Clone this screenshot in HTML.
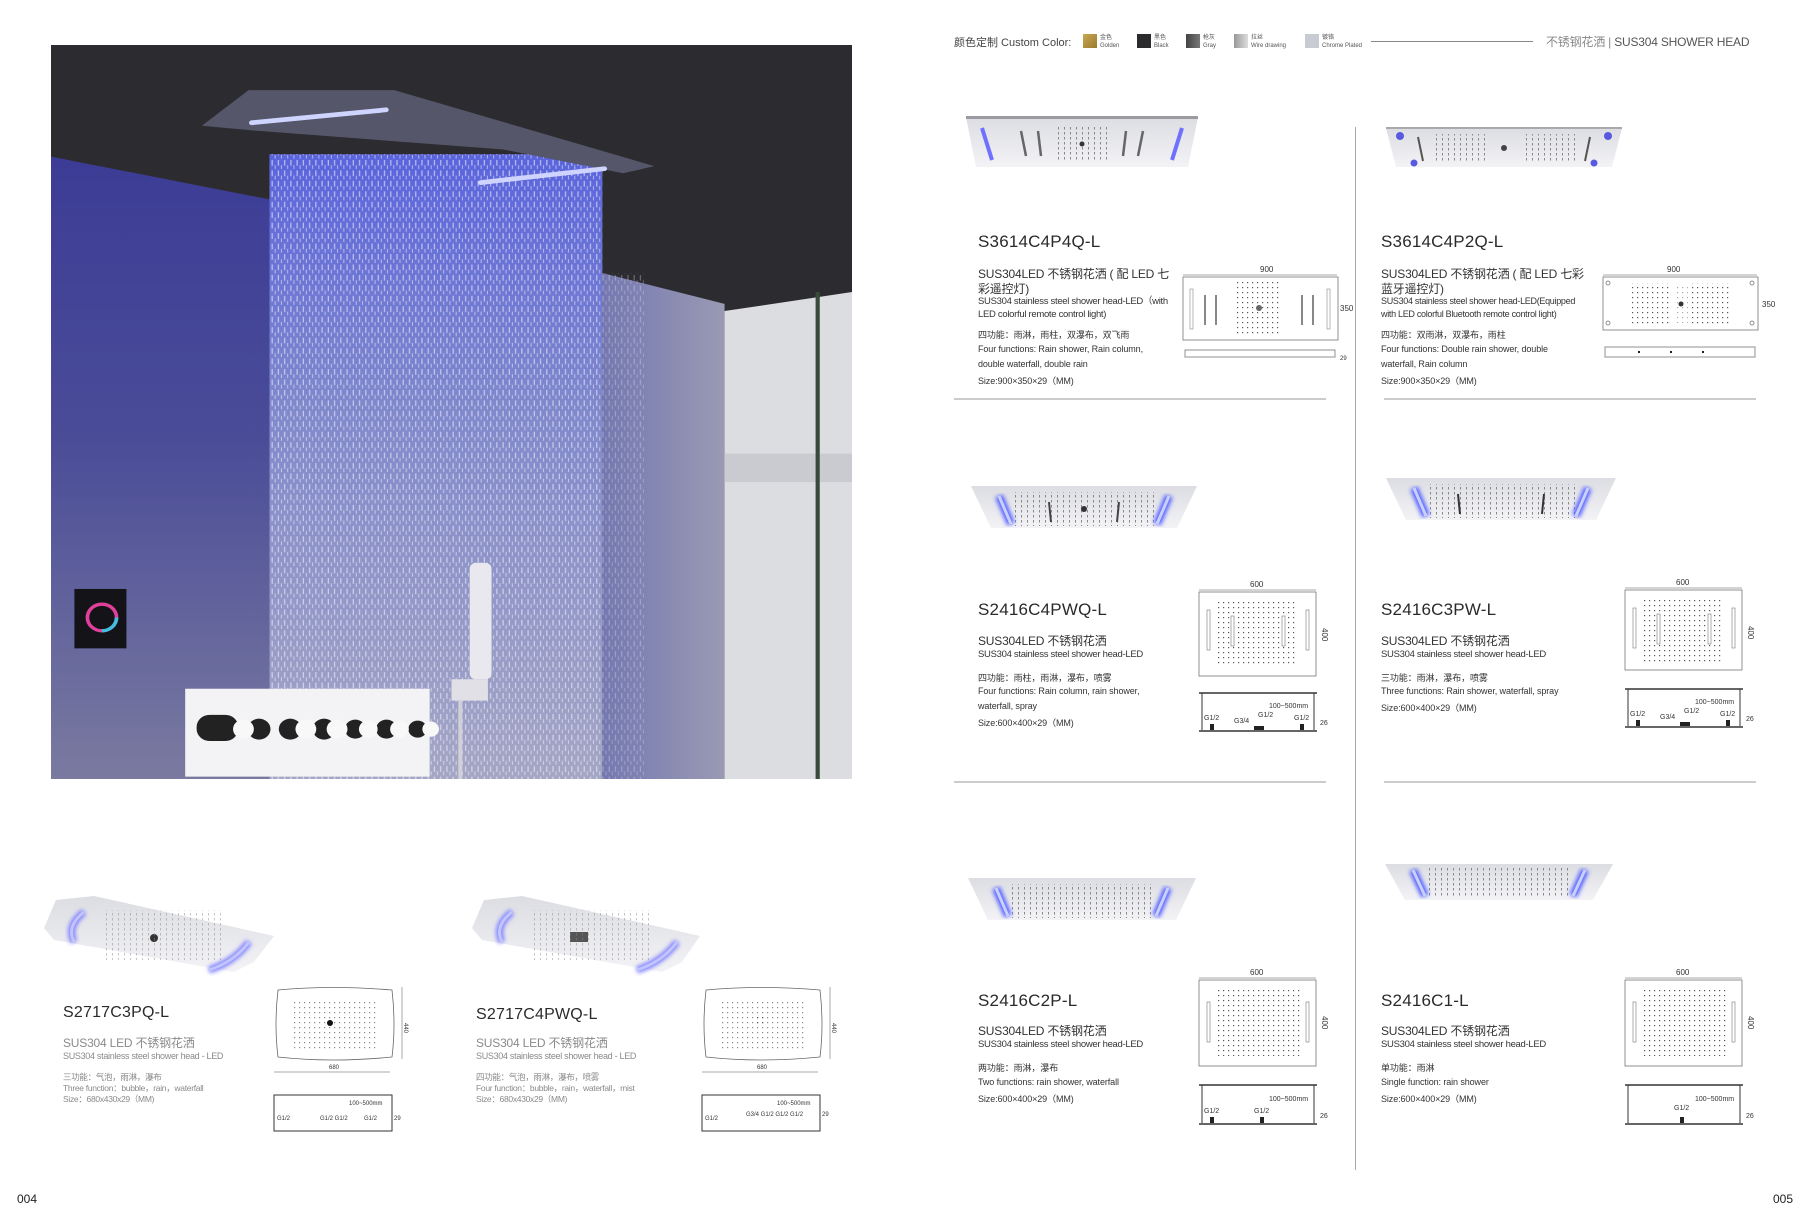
<!DOCTYPE html>
<html><head><meta charset="utf-8">
<style>
*{margin:0;padding:0;box-sizing:border-box}
body{width:1807px;height:1226px;background:#fff;position:relative;overflow:hidden;font-family:"Liberation Sans","Noto Sans CJK SC",sans-serif;color:#333}
.a{position:absolute;white-space:nowrap}
.t{font-size:17px;color:#2a2a2a;letter-spacing:.2px}
.c{font-size:12px;color:#333;line-height:15px;letter-spacing:-.2px}
.e{font-size:9.5px;color:#333;line-height:13px;letter-spacing:-.3px}
.f{font-size:9px;color:#333;letter-spacing:-.1px}
.g{color:#8a8a8a}
.sw{position:absolute;top:34px;width:14px;height:14px}
.sl{position:absolute;font-size:6px;color:#555;line-height:8px;top:34px}
</style></head><body>

<!-- PHOTO -->
<svg class="a" style="left:51px;top:45px" width="801" height="734" viewBox="0 0 1540 1545" preserveAspectRatio="none">
<defs>
<linearGradient id="wall" x1="0" y1="0" x2="0" y2="1"><stop offset="0" stop-color="#3c3c96"/><stop offset=".45" stop-color="#4a4c98"/><stop offset="1" stop-color="#7a7aa0"/></linearGradient>
<linearGradient id="rain" x1="0" y1="0" x2="0" y2="1"><stop offset="0" stop-color="#5a64dc"/><stop offset=".4" stop-color="#8088cc"/><stop offset="1" stop-color="#a4a6c4"/></linearGradient>
<linearGradient id="rw" x1="0" y1="0" x2="1" y2="0"><stop offset="0" stop-color="#7478b0"/><stop offset="1" stop-color="#9a9ab4"/></linearGradient>
<pattern id="drops" width="12" height="22" patternUnits="userSpaceOnUse"><rect x="4" y="0" width="2.5" height="12" fill="#f0f2ff" opacity=".6"/><rect x="10" y="11" width="2" height="8" fill="#fff" opacity=".5"/></pattern>
</defs>
<rect width="1540" height="1545" fill="#2c2b30"/>
<polygon points="0,235 420,325 420,1545 0,1545" fill="url(#wall)"/>
<rect x="420" y="230" width="640" height="1315" fill="url(#rain)"/>
<rect x="420" y="230" width="640" height="1315" fill="url(#drops)"/>
<polygon points="1060,480 1295,545 1295,1545 1060,1545" fill="url(#rw)"/>
<rect x="1060" y="480" width="80" height="1065" fill="url(#drops)" opacity=".5"/>
<polygon points="1295,560 1540,520 1540,1545 1295,1545" fill="#dcdde1"/>
<rect x="1295" y="860" width="245" height="60" fill="#cacbd0"/>
<rect x="1470" y="520" width="8" height="1025" fill="#3a4a3a"/>
<polygon points="290,170 380,95 660,95 1160,255 1100,270 870,220 390,180" fill="#55566a"/>
<rect x="380" y="145" width="270" height="10" rx="5" fill="#cfd4ff" transform="rotate(-6 515 150)"/>
<rect x="820" y="270" width="250" height="10" rx="5" fill="#cfd4ff" transform="rotate(-7 945 275)"/>
<rect x="45" y="1145" width="100" height="125" fill="#141418"/>
<circle cx="98" cy="1205" r="28" fill="none" stroke="#e0409a" stroke-width="7"/>
<circle cx="98" cy="1205" r="28" fill="none" stroke="#40c0e0" stroke-width="7" stroke-dasharray="44 132"/>
<rect x="258" y="1355" width="470" height="185" fill="#f3f3f5"/>
<g fill="#222"><rect x="280" y="1410" width="80" height="55" rx="25"/><circle cx="400" cy="1440" r="22"/><circle cx="460" cy="1440" r="22"/><circle cx="525" cy="1440" r="22"/><circle cx="585" cy="1440" r="20"/><circle cx="645" cy="1440" r="20"/><circle cx="705" cy="1440" r="18"/></g>
<g fill="#f8f8f8"><circle cx="370" cy="1440" r="20"/><circle cx="490" cy="1440" r="20"/><circle cx="550" cy="1440" r="20"/><circle cx="610" cy="1440" r="18"/><circle cx="670" cy="1440" r="18"/><circle cx="730" cy="1440" r="16"/></g>
<rect x="805" y="1090" width="42" height="245" rx="12" fill="#e8e8ee"/>
<rect x="770" y="1335" width="70" height="45" fill="#e0e0e6"/>
<rect x="783" y="1380" width="8" height="165" fill="#d0d0d8"/>
</svg>

<!-- HEADER -->
<div class="a" style="left:954px;top:34px;font-size:11px;color:#444">颜色定制 Custom Color:</div>
<div class="sw" style="left:1083px;background:linear-gradient(135deg,#c8a850,#9a7a30)"></div><div class="sl" style="left:1100px">金色<br>Golden</div>
<div class="sw" style="left:1137px;background:#2b2b2d"></div><div class="sl" style="left:1154px">黑色<br>Black</div>
<div class="sw" style="left:1186px;background:linear-gradient(90deg,#444,#777)"></div><div class="sl" style="left:1203px">枪灰<br>Gray</div>
<div class="sw" style="left:1234px;background:linear-gradient(90deg,#999,#ddd)"></div><div class="sl" style="left:1251px">拉丝<br>Wire drawing</div>
<div class="sw" style="left:1305px;background:#c8ccd2"></div><div class="sl" style="left:1322px">镀铬<br>Chrome Plated</div>
<div class="a" style="left:1371px;top:41px;width:162px;height:1px;background:#888"></div>
<div class="a" style="left:1546px;top:33px;font-size:12px;color:#888;letter-spacing:-.2px">不锈钢花洒 | <span style="color:#555">SUS304 SHOWER HEAD</span></div>

<!-- dividers -->
<div class="a" style="left:1355px;top:127px;width:1px;height:1043px;background:#aaa"></div>
<div class="a" style="left:954px;top:398px;width:372px;height:2px;background:#ccc"></div>
<div class="a" style="left:1384px;top:398px;width:372px;height:2px;background:#ccc"></div>
<div class="a" style="left:954px;top:781px;width:372px;height:2px;background:#ccc"></div>
<div class="a" style="left:1384px;top:781px;width:372px;height:2px;background:#ccc"></div>

<svg width="0" height="0" style="position:absolute"><defs>
<linearGradient id="hg" x1="0" y1="0" x2="0" y2="1"><stop offset="0" stop-color="#dcdde2"/><stop offset="1" stop-color="#f3f3f6"/></linearGradient>
<pattern id="hd" width="6" height="5" patternUnits="userSpaceOnUse"><rect x="2" y="1" width="1" height="2.5" fill="#888"/></pattern>
<filter id="gl"><feGaussianBlur stdDeviation="2"/></filter>
<pattern id="dd" width="5" height="5" patternUnits="userSpaceOnUse"><rect x="2" y="2" width="1.2" height="1.2" fill="#555"/></pattern>
</defs></svg>

<!-- row1 L -->
<svg class="a" style="left:966px;top:116px" width="232" height="52" viewBox="0 0 232 52"><polygon points="0,1 232,1 222,51 10,51" fill="url(#hg)"/><rect x="0" y="0" width="232" height="3" fill="#9a9aa0"/><rect x="87" y="10" width="58" height="36" fill="url(#hd)"/><circle cx="116" cy="28" r="2.5" fill="#333"/><g stroke="#666" stroke-width="2.5"><line x1="55" y1="15" x2="60" y2="40"/><line x1="72" y1="15" x2="75" y2="40"/><line x1="177" y1="15" x2="172" y2="40"/><line x1="160" y1="15" x2="157" y2="40"/></g><g stroke="#7070ff" stroke-width="4"><line x1="16" y1="12" x2="26" y2="44"/><line x1="216" y1="12" x2="206" y2="44"/></g></svg>
<!-- row1 R -->
<svg class="a" style="left:1386px;top:127px" width="236" height="42" viewBox="0 0 236 42"><polygon points="0,1 236,1 226,40 10,40" fill="url(#hg)"/><rect x="0" y="0" width="236" height="2" fill="#aaa"/><rect x="45" y="7" width="55" height="28" fill="url(#hd)"/><rect x="136" y="7" width="55" height="28" fill="url(#hd)"/><circle cx="118" cy="21" r="3" fill="#444"/><g stroke="#555" stroke-width="2"><line x1="32" y1="10" x2="37" y2="34"/><line x1="204" y1="10" x2="199" y2="34"/></g><g fill="#5a5ae0"><circle cx="14" cy="9" r="4"/><circle cx="222" cy="9" r="4"/><circle cx="28" cy="36" r="3.5"/><circle cx="208" cy="36" r="3.5"/></g></svg>
<!-- row2 L -->
<svg class="a" style="left:971px;top:484px" width="226" height="48" viewBox="0 0 226 48"><polygon points="0,2 226,2 206,44 20,44" fill="url(#hg)"/><rect x="40" y="8" width="146" height="34" fill="url(#hd)"/><circle cx="113" cy="25" r="3" fill="#333"/><g stroke="#444" stroke-width="2"><line x1="78" y1="18" x2="80" y2="38"/><line x1="148" y1="18" x2="146" y2="38"/></g><g stroke="#5560ff" stroke-width="8" filter="url(#gl)"><line x1="28" y1="12" x2="40" y2="40"/><line x1="198" y1="12" x2="186" y2="40"/></g><g stroke="#c8d0ff" stroke-width="3"><line x1="28" y1="12" x2="40" y2="40"/><line x1="198" y1="12" x2="186" y2="40"/></g></svg>
<!-- row2 R -->
<svg class="a" style="left:1386px;top:476px" width="230" height="48" viewBox="0 0 230 48"><polygon points="0,2 230,2 210,44 20,44" fill="url(#hg)"/><rect x="40" y="8" width="150" height="34" fill="url(#hd)"/><g stroke="#333" stroke-width="2"><line x1="72" y1="18" x2="74" y2="38"/><line x1="158" y1="18" x2="156" y2="38"/></g><g stroke="#5560ff" stroke-width="8" filter="url(#gl)"><line x1="28" y1="12" x2="40" y2="40"/><line x1="202" y1="12" x2="190" y2="40"/></g><g stroke="#c8d0ff" stroke-width="3"><line x1="28" y1="12" x2="40" y2="40"/><line x1="202" y1="12" x2="190" y2="40"/></g></svg>
<!-- row3 L -->
<svg class="a" style="left:968px;top:876px" width="228" height="48" viewBox="0 0 228 48"><polygon points="0,2 228,2 208,44 20,44" fill="url(#hg)"/><rect x="40" y="8" width="148" height="34" fill="url(#hd)"/><g stroke="#5560ff" stroke-width="8" filter="url(#gl)"><line x1="28" y1="12" x2="40" y2="40"/><line x1="200" y1="12" x2="188" y2="40"/></g><g stroke="#c8d0ff" stroke-width="3"><line x1="28" y1="12" x2="40" y2="40"/><line x1="200" y1="12" x2="188" y2="40"/></g></svg>
<!-- row3 R -->
<svg class="a" style="left:1385px;top:862px" width="228" height="42" viewBox="0 0 228 42"><polygon points="0,2 228,2 208,38 20,38" fill="url(#hg)"/><rect x="40" y="6" width="148" height="30" fill="url(#hd)"/><g stroke="#5560ff" stroke-width="8" filter="url(#gl)"><line x1="28" y1="8" x2="40" y2="34"/><line x1="200" y1="8" x2="188" y2="34"/></g><g stroke="#c8d0ff" stroke-width="3"><line x1="28" y1="8" x2="40" y2="34"/><line x1="200" y1="8" x2="188" y2="34"/></g></svg>

<!-- bottom left heads -->
<svg class="a" style="left:44px;top:892px" width="230" height="84" viewBox="0 0 230 84"><polygon points="12,8 50,4 230,44 210,70 190,80 10,48 0,36" fill="url(#hg)"/><g stroke="#8080ff" stroke-width="7" filter="url(#gl)" fill="none"><path d="M40,20 Q22,34 30,50"/><path d="M205,50 Q190,70 165,78"/></g><g stroke="#c0c4ff" stroke-width="3" fill="none"><path d="M40,20 Q22,34 30,50"/><path d="M205,50 Q190,70 165,78"/></g><circle cx="110" cy="46" r="4" fill="#333"/><rect x="60" y="18" width="120" height="50" fill="url(#hd)" opacity=".5"/></svg>
<svg class="a" style="left:472px;top:892px" width="228" height="84" viewBox="0 0 228 84"><polygon points="12,8 50,4 228,44 210,70 190,80 10,48 0,36" fill="url(#hg)"/><g stroke="#8080ff" stroke-width="7" filter="url(#gl)" fill="none"><path d="M40,20 Q22,34 30,50"/><path d="M205,50 Q190,70 165,78"/></g><g stroke="#c0c4ff" stroke-width="3" fill="none"><path d="M40,20 Q22,34 30,50"/><path d="M205,50 Q190,70 165,78"/></g><rect x="98" y="40" width="18" height="10" fill="#555"/><rect x="60" y="18" width="120" height="50" fill="url(#hd)" opacity=".5"/></svg>

<!-- TEXT right page -->
<div class="a t" style="left:978px;top:232px">S3614C4P4Q-L</div>
<div class="a c" style="left:978px;top:267px">SUS304LED 不锈钢花洒 ( 配 LED 七<br>彩遥控灯)</div>
<div class="a e" style="left:978px;top:295px">SUS304 stainless steel shower head-LED（with<br>LED colorful remote control light)</div>
<div class="a f" style="left:978px;top:328px">四功能：雨淋，雨柱，双瀑布，双飞雨</div>
<div class="a f" style="left:978px;top:344px">Four functions: Rain shower, Rain column,</div>
<div class="a f" style="left:978px;top:359px">double waterfall, double rain</div>
<div class="a f" style="left:978px;top:374px">Size:900×350×29（MM)</div>

<div class="a t" style="left:1381px;top:232px">S3614C4P2Q-L</div>
<div class="a c" style="left:1381px;top:267px">SUS304LED 不锈钢花洒 ( 配 LED 七彩<br>蓝牙遥控灯)</div>
<div class="a e" style="left:1381px;top:295px;font-size:9px">SUS304 stainless steel shower head-LED(Equipped<br>with LED colorful Bluetooth remote control light)</div>
<div class="a f" style="left:1381px;top:328px">四功能：双雨淋，双瀑布，雨柱</div>
<div class="a f" style="left:1381px;top:344px">Four functions: Double rain shower, double</div>
<div class="a f" style="left:1381px;top:359px">waterfall, Rain column</div>
<div class="a f" style="left:1381px;top:374px">Size:900×350×29（MM)</div>

<div class="a t" style="left:978px;top:600px">S2416C4PWQ-L</div>
<div class="a c" style="left:978px;top:634px">SUS304LED 不锈钢花洒</div>
<div class="a e" style="left:978px;top:648px">SUS304 stainless steel shower head-LED</div>
<div class="a f" style="left:978px;top:671px">四功能：雨柱，雨淋，瀑布，喷雾</div>
<div class="a f" style="left:978px;top:686px">Four functions: Rain column, rain shower,</div>
<div class="a f" style="left:978px;top:701px">waterfall, spray</div>
<div class="a f" style="left:978px;top:716px">Size:600×400×29（MM)</div>

<div class="a t" style="left:1381px;top:600px">S2416C3PW-L</div>
<div class="a c" style="left:1381px;top:634px">SUS304LED 不锈钢花洒</div>
<div class="a e" style="left:1381px;top:648px">SUS304 stainless steel shower head-LED</div>
<div class="a f" style="left:1381px;top:671px">三功能：雨淋，瀑布，喷雾</div>
<div class="a f" style="left:1381px;top:686px">Three functions: Rain shower, waterfall, spray</div>
<div class="a f" style="left:1381px;top:701px">Size:600×400×29（MM)</div>

<div class="a t" style="left:978px;top:991px">S2416C2P-L</div>
<div class="a c" style="left:978px;top:1024px">SUS304LED 不锈钢花洒</div>
<div class="a e" style="left:978px;top:1038px">SUS304 stainless steel shower head-LED</div>
<div class="a f" style="left:978px;top:1061px">两功能：雨淋，瀑布</div>
<div class="a f" style="left:978px;top:1077px">Two functions: rain shower, waterfall</div>
<div class="a f" style="left:978px;top:1092px">Size:600×400×29（MM)</div>

<div class="a t" style="left:1381px;top:991px">S2416C1-L</div>
<div class="a c" style="left:1381px;top:1024px">SUS304LED 不锈钢花洒</div>
<div class="a e" style="left:1381px;top:1038px">SUS304 stainless steel shower head-LED</div>
<div class="a f" style="left:1381px;top:1061px">单功能：雨淋</div>
<div class="a f" style="left:1381px;top:1077px">Single function: rain shower</div>
<div class="a f" style="left:1381px;top:1092px">Size:600×400×29（MM)</div>

<!-- TEXT left page bottom -->
<div class="a t" style="left:63px;top:1004px;font-size:16px">S2717C3PQ-L</div>
<div class="a c g" style="left:63px;top:1036px;font-size:12px">SUS304 LED 不锈钢花洒</div>
<div class="a e g" style="left:63px;top:1050px;font-size:9px">SUS304 stainless steel shower head - LED</div>
<div class="a e g" style="left:63px;top:1072px;font-size:8.5px;line-height:11px">三功能：气泡，雨淋，瀑布<br>Three function：bubble，rain，waterfall<br>Size：680x430x29（MM)</div>
<div class="a t" style="left:476px;top:1006px;font-size:16px">S2717C4PWQ-L</div>
<div class="a c g" style="left:476px;top:1036px;font-size:12px">SUS304 LED 不锈钢花洒</div>
<div class="a e g" style="left:476px;top:1050px;font-size:9px">SUS304 stainless steel shower head - LED</div>
<div class="a e g" style="left:476px;top:1072px;font-size:8.5px;line-height:11px">四功能：气泡，雨淋，瀑布，喷雾<br>Four function：bubble，rain，waterfall，mist<br>Size：680x430x29（MM)</div>

<div class="a" style="left:17px;top:1192px;font-size:12px;color:#222">004</div>
<div class="a" style="left:1773px;top:1192px;font-size:12px;color:#222">005</div>

<!-- DRAWINGS -->
<svg class="a" style="left:1180px;top:265px" width="180" height="102" viewBox="0 0 180 102" font-family="Liberation Sans" font-size="8" fill="#333">
<text x="80" y="7">900</text><line x1="3" y1="10" x2="157" y2="10" stroke="#555" stroke-width=".6"/>
<rect x="3" y="12" width="155" height="63" fill="#fff" stroke="#777" stroke-width=".8"/>
<rect x="56" y="16" width="46" height="55" fill="url(#dd)"/><circle cx="79" cy="43" r="3" fill="#666"/>
<g stroke="#555" stroke-width="1.4"><line x1="25" y1="30" x2="25" y2="60"/><line x1="36" y1="30" x2="36" y2="60"/><line x1="122" y1="30" x2="122" y2="60"/><line x1="133" y1="30" x2="133" y2="60"/></g>
<rect x="10" y="24" width="3" height="40" fill="none" stroke="#888" stroke-width=".6"/><rect x="147" y="24" width="3" height="40" fill="none" stroke="#888" stroke-width=".6"/>
<text x="160" y="46">350</text>
<rect x="5" y="85" width="150" height="7" fill="none" stroke="#777" stroke-width=".8"/><text x="160" y="95" font-size="6">29</text></svg>
<svg class="a" style="left:1600px;top:265px" width="180" height="102" viewBox="0 0 180 102" font-family="Liberation Sans" font-size="8" fill="#333">
<text x="67" y="7">900</text><line x1="3" y1="10" x2="157" y2="10" stroke="#555" stroke-width=".6"/>
<rect x="3" y="12" width="155" height="53" fill="#fff" stroke="#777" stroke-width=".8"/>
<rect x="30" y="18" width="40" height="42" fill="url(#dd)"/><rect x="92" y="18" width="40" height="42" fill="url(#dd)"/><rect x="74" y="20" width="14" height="38" fill="url(#dd)" opacity=".5"/><circle cx="81" cy="39" r="2.5" fill="#333"/>
<g stroke="#777" stroke-width=".8" fill="none"><circle cx="8" cy="18" r="2"/><circle cx="152" cy="18" r="2"/><circle cx="8" cy="58" r="2"/><circle cx="152" cy="58" r="2"/></g>
<text x="162" y="42">350</text>
<rect x="5" y="82" width="150" height="10" fill="none" stroke="#777" stroke-width=".8"/><g fill="#222"><rect x="38" y="86" width="2" height="2"/><rect x="70" y="86" width="2" height="2"/><rect x="102" y="86" width="2" height="2"/></g></svg>

<svg class="a" style="left:1196px;top:580px" width="140" height="160" viewBox="0 0 140 160" font-family="Liberation Sans" font-size="8" fill="#333">
<text x="54" y="7">600</text><line x1="3" y1="10" x2="120" y2="10" stroke="#555" stroke-width=".6"/>
<rect x="3" y="12" width="117" height="84" fill="#fff" stroke="#777" stroke-width=".8"/>
<rect x="22" y="22" width="80" height="64" fill="url(#dd)"/>
<g fill="#fff" stroke="#777" stroke-width=".6"><rect x="11" y="30" width="3" height="40"/><rect x="110" y="30" width="3" height="40"/><rect x="35" y="36" width="3" height="30"/><rect x="86" y="36" width="3" height="30"/></g>
<text x="126" y="48" transform="rotate(90 126 48)">400</text>
<line x1="3" y1="113" x2="121" y2="113" stroke="#333" stroke-width="1.6"/><line x1="6" y1="113" x2="6" y2="150" stroke="#333"/><line x1="118" y1="113" x2="118" y2="150" stroke="#333"/><line x1="3" y1="151" x2="121" y2="151" stroke="#333" stroke-width="1.6"/>
<text x="73" y="128" font-size="7">100~500mm</text><text x="8" y="140" font-size="7">G1/2</text><text x="38" y="143" font-size="7">G3/4</text><text x="62" y="137" font-size="7">G1/2</text><text x="98" y="140" font-size="7">G1/2</text><text x="124" y="145" font-size="7">26</text>
<rect x="14" y="144" width="4" height="6" fill="#222"/><rect x="104" y="144" width="4" height="6" fill="#222"/><rect x="58" y="146" width="10" height="4" fill="#222"/></svg>
<svg class="a" style="left:1622px;top:578px" width="140" height="160" viewBox="0 0 140 160" font-family="Liberation Sans" font-size="8" fill="#333">
<text x="54" y="7">600</text><line x1="3" y1="10" x2="120" y2="10" stroke="#555" stroke-width=".6"/>
<rect x="3" y="12" width="117" height="80" fill="#fff" stroke="#777" stroke-width=".8"/>
<rect x="22" y="22" width="80" height="62" fill="url(#dd)"/>
<g fill="#fff" stroke="#777" stroke-width=".6"><rect x="11" y="30" width="3" height="40"/><rect x="110" y="30" width="3" height="40"/><rect x="35" y="36" width="3" height="30"/><rect x="86" y="36" width="3" height="30"/></g>
<text x="126" y="48" transform="rotate(90 126 48)">400</text>
<line x1="3" y1="111" x2="121" y2="111" stroke="#333" stroke-width="1.6"/><line x1="6" y1="111" x2="6" y2="148" stroke="#333"/><line x1="118" y1="111" x2="118" y2="148" stroke="#333"/><line x1="3" y1="149" x2="121" y2="149" stroke="#333" stroke-width="1.6"/>
<text x="73" y="126" font-size="7">100~500mm</text><text x="8" y="138" font-size="7">G1/2</text><text x="38" y="141" font-size="7">G3/4</text><text x="62" y="135" font-size="7">G1/2</text><text x="98" y="138" font-size="7">G1/2</text><text x="124" y="143" font-size="7">26</text>
<rect x="14" y="142" width="4" height="6" fill="#222"/><rect x="104" y="142" width="4" height="6" fill="#222"/><rect x="58" y="144" width="10" height="4" fill="#222"/></svg>
<svg class="a" style="left:1196px;top:968px" width="140" height="165" viewBox="0 0 140 165" font-family="Liberation Sans" font-size="8" fill="#333">
<text x="54" y="7">600</text><line x1="3" y1="10" x2="120" y2="10" stroke="#555" stroke-width=".6"/>
<rect x="3" y="12" width="117" height="86" fill="#fff" stroke="#777" stroke-width=".8"/>
<rect x="20" y="22" width="84" height="66" fill="url(#dd)"/>
<g fill="#fff" stroke="#777" stroke-width=".6"><rect x="11" y="34" width="3" height="40"/><rect x="110" y="34" width="3" height="40"/></g>
<text x="126" y="48" transform="rotate(90 126 48)">400</text>
<line x1="3" y1="117" x2="121" y2="117" stroke="#333" stroke-width="1.6"/><line x1="6" y1="117" x2="6" y2="155" stroke="#333"/><line x1="118" y1="117" x2="118" y2="155" stroke="#333"/><line x1="3" y1="156" x2="121" y2="156" stroke="#333" stroke-width="1.6"/>
<text x="73" y="133" font-size="7">100~500mm</text><text x="8" y="145" font-size="7">G1/2</text><text x="58" y="145" font-size="7">G1/2</text><text x="124" y="150" font-size="7">26</text>
<rect x="14" y="149" width="4" height="6" fill="#222"/><rect x="64" y="149" width="4" height="6" fill="#222"/></svg>
<svg class="a" style="left:1622px;top:968px" width="140" height="165" viewBox="0 0 140 165" font-family="Liberation Sans" font-size="8" fill="#333">
<text x="54" y="7">600</text><line x1="3" y1="10" x2="120" y2="10" stroke="#555" stroke-width=".6"/>
<rect x="3" y="12" width="117" height="86" fill="#fff" stroke="#777" stroke-width=".8"/>
<rect x="20" y="22" width="84" height="66" fill="url(#dd)"/>
<g fill="#fff" stroke="#777" stroke-width=".6"><rect x="11" y="34" width="3" height="40"/><rect x="110" y="34" width="3" height="40"/></g>
<text x="126" y="48" transform="rotate(90 126 48)">400</text>
<line x1="3" y1="117" x2="121" y2="117" stroke="#333" stroke-width="1.6"/><line x1="6" y1="117" x2="6" y2="155" stroke="#333"/><line x1="118" y1="117" x2="118" y2="155" stroke="#333"/><line x1="3" y1="156" x2="121" y2="156" stroke="#333" stroke-width="1.6"/>
<text x="73" y="133" font-size="7">100~500mm</text><text x="52" y="142" font-size="7">G1/2</text><text x="124" y="150" font-size="7">26</text>
<rect x="58" y="149" width="4" height="6" fill="#222"/></svg>

<svg class="a" style="left:272px;top:985px" width="140" height="150" viewBox="0 0 140 150" font-family="Liberation Sans" font-size="6" fill="#333">
<path d="M6,5 Q60,0 120,5 Q124,40 120,72 Q60,78 6,72 Q2,40 6,5Z" fill="#fff" stroke="#666" stroke-width=".8"/>
<rect x="22" y="14" width="84" height="50" fill="url(#dd)" opacity=".7"/><circle cx="58" cy="38" r="3" fill="#111"/>
<line x1="130" y1="2" x2="130" y2="74" stroke="#555" stroke-width=".5"/><text x="132" y="38" transform="rotate(90 132 38)">440</text>
<line x1="2" y1="87" x2="118" y2="87" stroke="#555" stroke-width=".5"/><text x="57" y="84">680</text>
<rect x="2" y="110" width="118" height="36" fill="none" stroke="#333" stroke-width="1"/><text x="77" y="120">100~500mm</text><text x="5" y="135">G1/2</text><text x="48" y="135">G1/2 G1/2</text><text x="92" y="135">G1/2</text><text x="122" y="135">29</text></svg>
<svg class="a" style="left:700px;top:985px" width="140" height="150" viewBox="0 0 140 150" font-family="Liberation Sans" font-size="6" fill="#333">
<path d="M6,5 Q60,0 120,5 Q124,40 120,72 Q60,78 6,72 Q2,40 6,5Z" fill="#fff" stroke="#666" stroke-width=".8"/>
<rect x="22" y="14" width="84" height="50" fill="url(#dd)" opacity=".7"/><rect x="54" y="32" width="10" height="10" fill="url(#dd)"/>
<line x1="130" y1="2" x2="130" y2="74" stroke="#555" stroke-width=".5"/><text x="132" y="38" transform="rotate(90 132 38)">440</text>
<line x1="2" y1="87" x2="118" y2="87" stroke="#555" stroke-width=".5"/><text x="57" y="84">680</text>
<rect x="2" y="110" width="118" height="36" fill="none" stroke="#333" stroke-width="1"/><text x="77" y="120">100~500mm</text><text x="5" y="135">G1/2</text><text x="46" y="131">G3/4 G1/2 G1/2 G1/2</text><text x="122" y="131">29</text></svg>

</body></html>
